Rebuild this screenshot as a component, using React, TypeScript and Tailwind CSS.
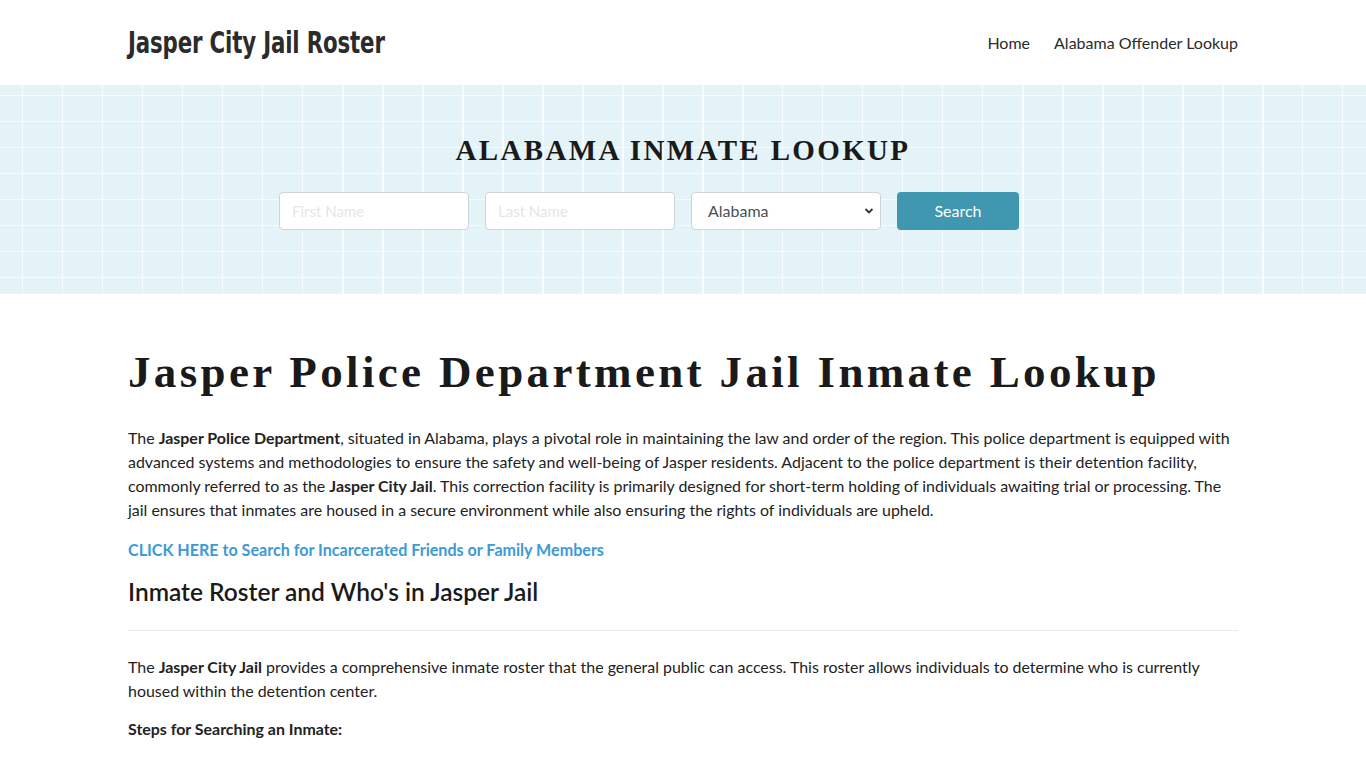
import React from "react";

export default function App() {
  return (
    <div className="min-h-screen bg-white text-[#212529] font-['Lato','Noto_Sans',sans-serif]">
      <header className="h-[85px] bg-white">
        <div className="mx-auto w-[1110px] h-full flex items-center justify-between">
          <a className="inline-block origin-left scale-x-[0.79] text-[30px] font-bold text-[#2b2b2b] tracking-[-0.2px] font-['Liberation_Sans_Narrow','DejaVu_Sans_Condensed',sans-serif] leading-none mt-[1px] whitespace-nowrap">
            Jasper City Jail Roster
          </a>
          <nav className="flex items-center gap-[24px] text-[16px] text-[#2b2b2b]">
            <a>Home</a>
            <a>Alabama Offender Lookup</a>
          </nav>
        </div>
      </header>

      <section className="h-[209px] bg-[#e3f3f8] bg-[image:repeating-linear-gradient(90deg,transparent_0px,transparent_22px,rgba(255,255,255,0.7)_22px,rgba(255,255,255,0.7)_23.5px,transparent_23.5px,transparent_40px),repeating-linear-gradient(180deg,transparent_0px,transparent_10px,rgba(255,255,255,0.7)_10px,rgba(255,255,255,0.7)_11.5px,transparent_11.5px,transparent_26px)] flex flex-col items-center">
        <h2 className="mt-[48px] text-[29px] leading-[34px] font-bold tracking-[2.35px] text-[#1a1a1a] font-['Liberation_Serif','Times_New_Roman',serif]">
          ALABAMA INMATE LOOKUP
        </h2>
        <form className="mt-[25px] mr-[68px] flex gap-[16px]">
          <input
            placeholder="First Name"
            className="w-[190px] h-[38px] rounded-[4px] border border-[#ced4da] bg-white px-[12px] text-[15px] placeholder:text-[#e6e6e6] outline-none"
          />
          <input
            placeholder="Last Name"
            className="w-[190px] h-[38px] rounded-[4px] border border-[#ced4da] bg-white px-[12px] text-[15px] placeholder:text-[#e6e6e6] outline-none"
          />
          <div className="relative w-[190px] h-[38px] rounded-[4px] border border-[#ced4da] bg-white flex items-center px-[16px] text-[16px] text-[#495057]">
            <span>Alabama</span>
            <svg className="absolute right-[6px] top-[14px]" width="10" height="8" viewBox="0 0 10 8">
              <path d="M1.5 2 L5 5.5 L8.5 2" fill="none" stroke="#333" strokeWidth="1.8" />
            </svg>
          </div>
          <button
            type="button"
            className="w-[122px] h-[38px] rounded-[4px] bg-[#4097b0] text-white text-[16px]"
          >
            Search
          </button>
        </form>
      </section>

      <main className="mx-auto w-[1110px] pt-[48px]">
        <h1 className="text-[45px] leading-[60px] font-bold tracking-[3.35px] text-[#1a1a1a] font-['Liberation_Serif','Times_New_Roman',serif]">
          Jasper Police Department Jail Inmate Lookup
        </h1>
        <p className="mt-[24px] text-[15.95px] leading-[24px] text-[#222]">
          The <b>Jasper Police Department</b>, situated in Alabama, plays a pivotal role in maintaining the law and order of the region. This police department is equipped with advanced systems and methodologies to ensure the safety and well-being of Jasper residents. Adjacent to the police department is their detention facility, commonly referred to as the <b>Jasper City Jail</b>. This correction facility is primarily designed for short-term holding of individuals awaiting trial or processing. The jail ensures that inmates are housed in a secure environment while also ensuring the rights of individuals are upheld.
        </p>
        <p className="mt-[16px] text-[16.1px] leading-[24px]">
          <a className="font-bold text-[#3c9ad6]">CLICK HERE to Search for Incarcerated Friends or Family Members</a>
        </p>
        <h2 className="mt-[13px] text-[24.5px] leading-[34px] font-semibold text-[#1a1a1a]">
          Inmate Roster and Who's in Jasper Jail
        </h2>
        <hr className="mt-[21px] border-t border-[#e8e8e8]" />
        <p className="mt-[24px] text-[15.95px] leading-[24px] text-[#222]">
          The <b>Jasper City Jail</b> provides a comprehensive inmate roster that the general public can access. This roster allows individuals to determine who is currently housed within the detention center.
        </p>
        <p className="mt-[14px] text-[15.95px] leading-[24px] font-bold text-[#222]">
          Steps for Searching an Inmate:
        </p>
      </main>
    </div>
  );
}
